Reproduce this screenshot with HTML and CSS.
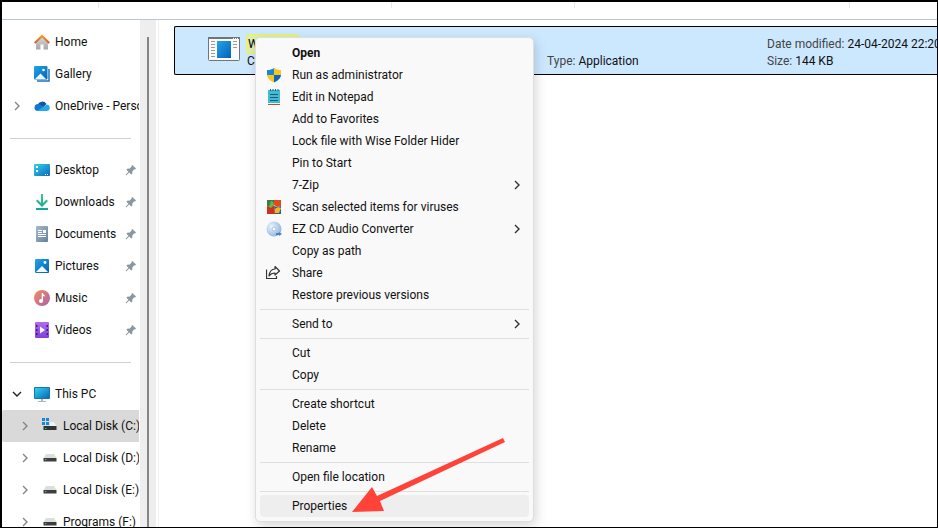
FILE: index.html
```html
<!DOCTYPE html>
<html lang="en">
<head>
<meta charset="utf-8">
<title>File Explorer</title>
<link rel="stylesheet" href="styles.css">
</head>
<body>
<svg class="defs" aria-hidden="true">
  <defs>
    <linearGradient id="blue" x1="0" y1="0" x2="1" y2="1"><stop offset="0" stop-color="#22a5ea"/><stop offset="1" stop-color="#0561b4"/></linearGradient>
    <linearGradient id="cyan" x1="0" y1="0" x2="1" y2="1"><stop offset="0" stop-color="#32d3ea"/><stop offset="1" stop-color="#0a68bd"/></linearGradient>
    <linearGradient id="green" x1="0" y1="0" x2="0" y2="1"><stop offset="0" stop-color="#3cc98a"/><stop offset="1" stop-color="#12a398"/></linearGradient>
    <linearGradient id="slate" x1="0" y1="0" x2="1" y2="1"><stop offset="0" stop-color="#a6bad0"/><stop offset="1" stop-color="#64809f"/></linearGradient>
    <linearGradient id="music" x1="0" y1="0" x2="1" y2="1"><stop offset="0" stop-color="#f09060"/><stop offset="1" stop-color="#ae60a8"/></linearGradient>
    <linearGradient id="violet" x1="0" y1="0" x2="0" y2="1"><stop offset="0" stop-color="#b06af5"/><stop offset="1" stop-color="#8040d8"/></linearGradient>
    <linearGradient id="wall" x1="0" y1="0" x2="0" y2="1"><stop offset="0" stop-color="#d8d8d8"/><stop offset="1" stop-color="#a8a8a8"/></linearGradient>
    <linearGradient id="roof" x1="0" y1="0" x2="0" y2="1"><stop offset="0" stop-color="#f59a1c"/><stop offset="1" stop-color="#d65a2c"/></linearGradient>
    <radialGradient id="disc" cx=".35" cy=".35" r=".8"><stop offset="0" stop-color="#eef5fd"/><stop offset="1" stop-color="#83a9dc"/></radialGradient>
    <symbol id="pin" viewBox="0 0 12 12"><path fill="#8b979f" d="M7.300 1 11 4.600 10.200 5.500 9.400 5.300 7.400 7.300 7.200 9.800 6.200 10.500 4.200 8.500 1.200 11.400.6 10.800 3.500 7.800 1.400 5.800 2.200 4.800 4.700 4.600 6.700 2.600 6.400 1.800Z"/></symbol>
    <symbol id="chevron" viewBox="0 0 8 10"><path d="m2 1 4 4-4 4" fill="none" stroke="currentColor" stroke-width="1.400"/></symbol>
    <symbol id="disk" viewBox="0 0 16 16"><path fill="#dedede" d="M4 4h8l2.500 4h-13Z"/><path fill="#3d3d3d" d="M1.500 8h13v3.500h-13Z"/><path fill="#3ed14a" d="M3 9h1.500v1H3Z"/></symbol>
  </defs>
</svg>
<div class="window">
  <header class="columns"><i></i><i></i><i></i><i></i></header>
  <div class="body">
    <nav class="tree" aria-label="Folders">
      <a class="node" href="#"><span class="twist"></span><svg class="icon" viewBox="0 0 16 16"><path fill="url(#wall)" d="M2 8 8 2l6 6v7.500H9.500v-5h-3v5H2Z"/><path d="M.7 9 8 2l7.300 7" fill="none" stroke="url(#roof)" stroke-width="2"/></svg><span class="label">Home</span></a>
      <a class="node" href="#"><span class="twist"></span><svg class="icon" viewBox="0 0 16 16"><path d="M15 3v12H3" fill="none" stroke="#1877c4" stroke-width="1.500"/><rect width="13.500" height="13.500" rx="1" fill="url(#blue)"/><path fill="#e8f6ff" d="m1 13 5.500-5.500L12 13Z"/><circle cx="9.500" cy="4" r="1.300" fill="#fff"/></svg><span class="label">Gallery</span></a>
      <a class="node" href="#"><span class="twist"><svg class="chevron"><use href="#chevron"/></svg></span><svg class="icon" viewBox="0 0 16 16"><path fill="#0b56a5" d="M3.500 7a5 5 0 0 1 9-1l-4 4Z"/><path fill="#1377d0" d="M4 13a3.500 3.500 0 0 1 0-7c2 0 4 1 6 4l-1 3Z"/><path fill="#28a8ea" d="M3 13 9 9l4-2.500a3.300 3.300 0 0 1 0 6.500Z"/></svg><span class="label">OneDrive - Personal</span></a>
      <hr>
      <a class="node" href="#"><span class="twist"></span><svg class="icon" viewBox="0 0 16 16"><rect y="2" width="16" height="12" rx="1" fill="url(#cyan)"/><path fill="#fff" d="M2 4h2v2H2ZM2 8h2v2H2ZM11 12h1v1h-1ZM13 12h1v1h-1Z"/></svg><span class="label">Desktop</span><svg class="pin"><use href="#pin"/></svg></a>
      <a class="node" href="#"><span class="twist"></span><svg class="icon" viewBox="0 0 16 16"><path fill="url(#green)" d="M7 0h2v9l3.500-3.500L14 7l-6 6-6-6 1.500-1.500L7 9ZM2 14h12v2H2Z"/></svg><span class="label">Downloads</span><svg class="pin"><use href="#pin"/></svg></a>
      <a class="node" href="#"><span class="twist"></span><svg class="icon" viewBox="0 0 16 16"><rect x="2" width="12" height="16" rx="1" fill="url(#slate)"/><path fill="#fff" d="M4 4h4v1H4ZM4 6h4v1H4ZM9 4h3v3H9ZM4 8h8v1H4ZM4 10h8v1H4Z"/></svg><span class="label">Documents</span><svg class="pin"><use href="#pin"/></svg></a>
      <a class="node" href="#"><span class="twist"></span><svg class="icon" viewBox="0 0 16 16"><rect x="1" y="1" width="14" height="14" rx="1" fill="url(#blue)"/><path fill="#f0f9ff" d="m2 14 6-6 6 6Z"/><circle cx="11" cy="4.500" r="1.400" fill="#fff"/></svg><span class="label">Pictures</span><svg class="pin"><use href="#pin"/></svg></a>
      <a class="node" href="#"><span class="twist"></span><svg class="icon" viewBox="0 0 16 16"><circle cx="8" cy="8" r="8" fill="url(#music)"/><circle cx="7" cy="11" r="2" fill="#fff"/><path fill="#fff" d="M7.700 3H9c0 2 2 1.500 2 3.500L9 6v5H7.700Z"/></svg><span class="label">Music</span><svg class="pin"><use href="#pin"/></svg></a>
      <a class="node" href="#"><span class="twist"></span><svg class="icon" viewBox="0 0 16 16"><rect x="1" y="0" width="14" height="16" rx="1" fill="url(#violet)"/><path fill="#432074" d="M2 3h1.500v2H2ZM2 7h1.500v2H2ZM2 11h1.500v2H2ZM12.500 3H14v2h-1.500ZM12.500 7H14v2h-1.500ZM12.500 11H14v2h-1.500Z"/><path fill="#fff" d="m6 4.500 5 3.500-5 3.500Z"/></svg><span class="label">Videos</span><svg class="pin"><use href="#pin"/></svg></a>
      <hr>
      <a class="node" href="#"><span class="twist open"><svg class="chevron"><use href="#chevron"/></svg></span><svg class="icon" viewBox="0 0 16 16"><path fill="#a9b5bf" d="M7 13h2v2h3v1H4v-1h3Z"/><rect y="1" width="16" height="12" rx="1" fill="#1374ae"/><rect x="1" y="2" width="14" height="10" fill="url(#cyan)"/></svg><span class="label">This PC</span></a>
      <a class="node child selected" href="#"><span class="twist"><svg class="chevron"><use href="#chevron"/></svg></span><svg class="icon" viewBox="0 0 16 16"><path fill="#f0f0f0" d="M8 4h4l2.500 4H8Z"/><path fill="#333" d="M1.500 8h13v4h-13Z"/><path fill="#3ed14a" d="M3 10h1.500v1H3Z"/><path fill="#1289dd" d="M0 0h3v3H0ZM4 0h3v3H4ZM0 4h3v3H0ZM4 4h3v3H4Z"/></svg><span class="label">Local Disk (C:)</span></a>
      <a class="node child" href="#"><span class="twist"><svg class="chevron"><use href="#chevron"/></svg></span><svg class="icon"><use href="#disk"/></svg><span class="label">Local Disk (D:)</span></a>
      <a class="node child" href="#"><span class="twist"><svg class="chevron"><use href="#chevron"/></svg></span><svg class="icon"><use href="#disk"/></svg><span class="label">Local Disk (E:)</span></a>
      <a class="node child" href="#"><span class="twist"><svg class="chevron"><use href="#chevron"/></svg></span><svg class="icon"><use href="#disk"/></svg><span class="label">Programs (F:)</span></a>
    </nav>
    <div class="scrollbar"><div class="thumb"></div></div>
    <main class="files">
      <article class="file">
        <svg class="app" viewBox="0 0 32 24"><rect x=".5" y=".5" width="31" height="23" rx="1" fill="#fafafa" stroke="#747474"/><path fill="#747474" d="M0 0h32v2H0Z"/><path fill="#fff" d="M25 1h1v1h-1ZM27 1h1v1h-1ZM29 1h1v1h-1Z"/><path d="M3 4.500h4M3 7.500h4M3 10.500h4M3 13.500h4M3 16.500h4M3 19.500h4M25 4.500h4M25 7.500h4M25 10.500h4" stroke="#9a9a9a"/><rect x="9" y="4" width="14" height="17" fill="url(#blue)"/></svg>
        <div class="info name"><p><mark>WiseFold</mark></p><p>Company</p></div>
        <div class="info kind"><p><span>Type:</span> Application</p></div>
        <div class="info dates"><p><span>Date modified:</span> 24-04-2024 22:20</p><p><span>Size:</span> 144 KB</p></div>
      </article>
    </main>
  </div>
</div>
<div class="menu">
  <button class="item default">Open</button>
  <button class="item"><svg class="glyph" viewBox="0 0 16 16"><path fill="#1687d9" d="M8 1C6 2.500 4 3 1 3v5h7Z"/><path fill="#fdc51b" d="M8 1c2 1.500 4 2 7 2v5H8Z"/><path fill="#fdc51b" d="M1 8h7v7.500C4 13.500 1.300 11.500 1 8Z"/><path fill="#0b67b8" d="M8 8h7c-.3 3.500-3 5.500-7 7.500Z"/></svg>Run as administrator</button>
  <button class="item"><svg class="glyph" viewBox="0 0 16 16"><path fill="#46b9d2" d="M2 1h12v13H2Z"/><path fill="#a85a27" d="M2 15h12v1H2Z"/><path fill="#e9f3f6" d="M2 14h12v1H2Z"/><path d="M4.500 0v2M7 0v2M9.500 0v2M12 0v2M4 5.500h8M4 8.500h8M4 11.500h8" stroke="#0b637e"/></svg>Edit in Notepad</button>
  <button class="item">Add to Favorites</button>
  <button class="item">Lock file with Wise Folder Hider</button>
  <button class="item">Pin to Start</button>
  <button class="item">7-Zip<svg class="more"><use href="#chevron"/></svg></button>
  <button class="item"><svg class="glyph" viewBox="0 0 16 16"><path fill="#397f45" d="M1 1h7v5L4 8 1 7Z"/><path fill="#e34a20" d="M8 1h7v6l-4 1-3-2Z"/><path fill="#2c5da0" d="M8 7l3 1 4-1v8H9Z"/><path fill="#c9321e" d="M1 7l4 1 3-2 1 9H1Z"/><path fill="#f6b71d" d="M9 10c2-2 4-2 6-1l-2 5H9Z"/><path fill="#66b64b" d="M5 2c2 0 3 2 3 4L5 9 3 8Z"/></svg>Scan selected items for viruses</button>
  <button class="item"><svg class="glyph" viewBox="0 0 16 16"><circle cx="8" cy="8" r="7.500" fill="url(#disc)"/><circle cx="8" cy="8" r="2" fill="#f5f9fe" stroke="#a9c2e2"/><path fill="#4b7fc1" d="M10 12h3v-1l3 2-3 2v-1h-3Z"/></svg>EZ CD Audio Converter<svg class="more"><use href="#chevron"/></svg></button>
  <button class="item">Copy as path</button>
  <button class="item"><svg class="glyph" viewBox="0 0 16 16"><path d="M.5 4.500v9h10V11M9 1.500 13.500 6 9 10V8C6 8 4.500 9 3 11 3.500 7 5.500 4 9 4Z" fill="none" stroke="#333" stroke-width="1.200" stroke-linejoin="round"/></svg>Share</button>
  <button class="item">Restore previous versions</button>
  <hr>
  <button class="item">Send to<svg class="more"><use href="#chevron"/></svg></button>
  <hr>
  <button class="item">Cut</button>
  <button class="item">Copy</button>
  <hr>
  <button class="item">Create shortcut</button>
  <button class="item">Delete</button>
  <button class="item">Rename</button>
  <hr>
  <button class="item">Open file location</button>
  <hr>
  <button class="item hover">Properties</button>
</div>
<svg class="arrow" viewBox="0 0 154 76" aria-hidden="true"><path fill="#ff4338" d="M0 74 20 49 25 58 151 0 153 4 28 63 32 73Z"/></svg>
</body>
</html>
```
FILE: styles.css
```css
* { box-sizing: border-box; }
body {
  margin: 0;
  font: 12px/16px Roboto, "Open Sans", sans-serif;
  color: #111;
  background: #fff;
}
.defs { position: absolute; width: 0; height: 0; }
.window {
  height: 100vh;
  display: flex;
  flex-direction: column;
  overflow: hidden;
  border: solid #000;
  border-width: 2px 1px 1px 2px;
}
.columns {
  flex: none;
  display: flex;
  height: 18px;
  border-bottom: 1px solid #bcc7d6;
  overflow: hidden;
}
.columns i { flex: none; width: 293px; height: 6px; border-right: 1px solid #e8e8e8; }
.columns i:first-child { width: 97px; }
.columns i:nth-child(3) { width: 183px; }
.columns i:last-child { width: 275px; }
.body { flex: 1; min-height: 0; display: flex; }
.tree { flex: none; width: 138px; padding-top: 6px; overflow: hidden; }
.tree hr { height: 1px; margin: 16px 9px 15px 8px; border: 0; background: #d0d0d0; }
.node {
  display: flex;
  align-items: center;
  height: 32px;
  margin-right: 1px;
  padding-left: 8px;
  overflow: hidden;
  color: inherit;
  text-decoration: none;
  white-space: nowrap;
}
.node.child { padding-left: 16px; }
.node.selected { background: #d9d9d9; border-radius: 2px 0 0 2px; }
.twist { flex: none; display: flex; justify-content: center; width: 14px; margin-right: 10px; color: #858585; }
.twist.open { color: #222; transform: rotate(90deg); }
.chevron { width: 8px; height: 10px; }
.icon { flex: none; width: 16px; height: 16px; margin-right: 5px; }
.label { flex: none; }
.pin { flex: none; width: 12px; height: 12px; margin: 0 2px 0 auto; }
.scrollbar { flex: none; width: 16px; padding: 17px 7px 0; background: #eee; }
.thumb { height: 100%; background: #858585; }
.files { flex: 1; min-width: 0; margin-left: 2px; padding: 6px 0 0 15px; border-left: 1px solid #f0f0f0; }
.file {
  display: flex;
  height: 49px;
  padding: 9px 0 0 33px;
  overflow: hidden;
  border: 1px solid #000;
  border-right: 0;
  border-radius: 2px 0 0 2px;
  background: #cce8ff;
}
.app { flex: none; width: 32px; height: 24px; margin: 1px 7px 0 0; }
.info { flex: none; white-space: nowrap; }
.info p { margin: 0 0 1px; }
.info span { color: #444; }
.name { width: 300px; }
.name mark { padding: 2px 1px; background: #dcefae; outline: 1px solid #f4f43a; border-radius: 2px; }
.kind { width: 220px; padding-top: 17px; }
.menu {
  position: absolute;
  left: 255px;
  top: 37px;
  width: 279px;
  padding: 4px;
  border: 1px solid #dedede;
  border-radius: 5px;
  background: #f9f9f9;
  box-shadow: 2px 4px 12px rgba(0, 0, 0, .16);
}
.menu hr { height: 1px; margin: 3px 0; border: 0; background: #dfdfdf; }
.item {
  position: relative;
  display: flex;
  align-items: center;
  width: 100%;
  height: 22px;
  padding: 0 8px 0 32px;
  border: 0;
  border-radius: 4px;
  background: none;
  color: #111;
  font: inherit;
  text-align: left;
  white-space: nowrap;
}
.item.default { font-weight: 700; }
.item.hover { background: #eee; }
.glyph { position: absolute; left: 6px; width: 16px; height: 16px; }
.more { width: 8px; height: 10px; margin-left: auto; color: #333; }
.arrow { position: absolute; left: 352px; top: 438px; width: 154px; height: 76px; }
```
